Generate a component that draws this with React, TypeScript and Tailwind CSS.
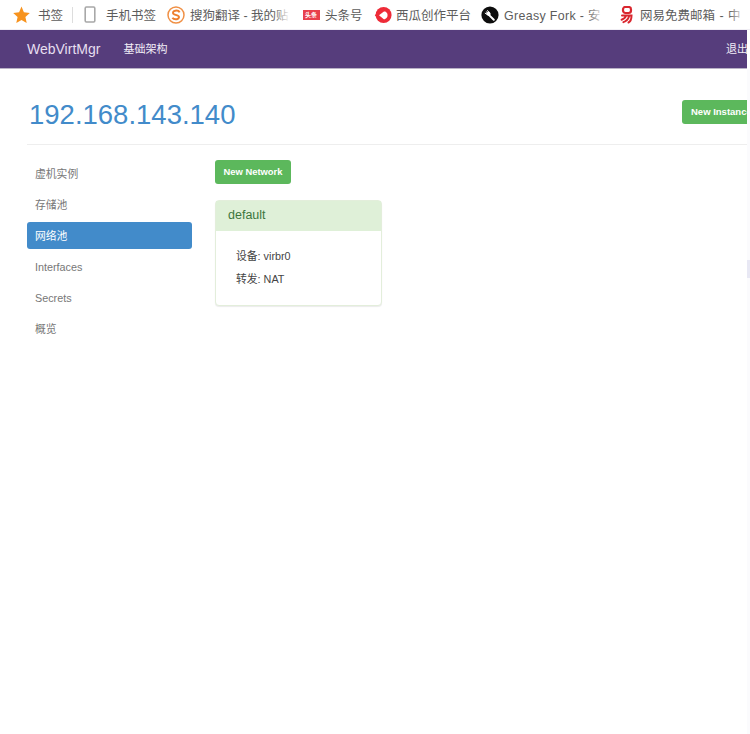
import React from "react";

function Bookmark({
  icon,
  text,
  width,
  gap = 5,
  textWidth,
  fade,
  greasy,
  wide,
}: {
  icon: React.ReactNode;
  text: string;
  width: number;
  gap?: number;
  textWidth?: number;
  fade?: boolean;
  greasy?: boolean;
  wide?: boolean;
}) {
  return (
    <div className="flex items-center shrink-0" style={{ width }}>
      <span className="w-[18px] h-[18px] flex items-center justify-center shrink-0">{icon}</span>
      <span
        className={
          greasy
            ? "relative pt-[3px] overflow-hidden whitespace-nowrap text-[12.4px] tracking-[0.35px] leading-[18px] text-[#5c5c5c]"
            : wide
              ? "relative pt-[2px] overflow-hidden whitespace-nowrap text-[12.5px] [word-spacing:1px] leading-[18px] text-[#5c5c5c]"
              : "relative pt-[2px] overflow-hidden whitespace-nowrap text-[12.5px] leading-[18px] text-[#5c5c5c]"
        }
        style={{ marginLeft: gap, width: textWidth }}
      >
        {text}
        {fade && <span className="absolute right-0 top-0 h-full w-[16px] bg-gradient-to-r from-transparent to-white" />}
      </span>
    </div>
  );
}

const Star = () => (
  <svg width="18" height="18" viewBox="0 0 18 18">
    <path d="M9.5 .6l2.4 5.7 5.9.6-4.4 4.1 1.3 6-5.2-3-5.2 3 1.3-6L1.2 6.9l5.9-.6z" fill="#f7931e" />
  </svg>
);
const Phone = () => (
  <svg width="12" height="17" viewBox="0 0 12 17">
    <rect x="1.2" y="1" width="9.6" height="15" rx="1.2" fill="none" stroke="#a8a8a8" strokeWidth="1.6" />
  </svg>
);
const Sogou = () => (
  <svg width="18" height="18" viewBox="0 0 18 18">
    <circle cx="9" cy="9" r="8" fill="#fff" stroke="#f09045" strokeWidth="1.5" />
    <path d="M12.6 6.4C12 5 10 4.4 8.2 4.7 5.8 5.1 5.2 7.5 7.2 8.4l3.6 1.2c2 .8 1.4 3.2-.8 3.6-1.8.3-3.8-.2-4.6-1.4" fill="none" stroke="#ee7f2d" strokeWidth="2" />
  </svg>
);
const Toutiao = () => (
  <span className="w-[17px] h-[10px] bg-[#e8404c] text-white text-[6px] leading-[10px] font-bold text-center overflow-hidden">头条</span>
);
const Xigua = () => (
  <svg width="18" height="18" viewBox="0 0 18 18">
    <circle cx="9.6" cy="9" r="8" fill="#ee2b38" />
    <path d="M.8 9.5L5 4h4v10H6z" fill="#ee2b38" />
    <path d="M5 9.2l4.6-3.5c.5-.4 1.2-.4 1.7-.1l1.2 .8c.7.5 1 1.2 1 2v1.6c0 .8-.4 1.5-1 2l-1.4.9c-.5.3-1.1.3-1.6 0z" fill="#fff" />
  </svg>
);
const Greasy = () => (
  <svg width="18" height="18" viewBox="0 0 18 18">
    <circle cx="9" cy="9" r="8.6" fill="#0d0d0d" />
    <path d="M7.6 8.6l5.2 5.2" stroke="#fff" strokeWidth="2" strokeLinecap="round" />
    <path d="M5.2 7.6c.6 1.6 2 2.6 3.4 2.4l1-1.4c.2-1.4-.8-2.8-2.4-3.4" fill="#fff" />
    <path d="M4.2 7.2l2.4 1.6M5.2 5.8l2.2 2M6.6 4.6l1.8 2.4" stroke="#fff" strokeWidth="1" strokeLinecap="round" />
  </svg>
);
const Netease = () => (
  <svg width="16" height="18" viewBox="0 0 16 18">
    <rect x="4" y="1" width="8" height="6" rx="2.4" fill="none" stroke="#d9262e" strokeWidth="2.2" />
    <path d="M3 9.5h9.5c0 3.5-1 6-3 7M7 9.8c-.6 2-2 3.2-4.4 4M10 10.5c-.8 2.6-2.6 4.6-5.6 5.6" fill="none" stroke="#d9262e" strokeWidth="2" strokeLinecap="round" />
  </svg>
);

function SideItem({ children, active }: { children: React.ReactNode; active?: boolean }) {
  return (
    <li
      className={
        active
          ? "h-[27px] rounded-[3px] bg-[#428bca] text-white pl-2 leading-[28px]"
          : "h-[27px] text-[#777] pl-2 leading-[28px]"
      }
    >
      {children}
    </li>
  );
}

export default function App() {
  return (
    <div
      className="w-[750px] h-[734px] overflow-hidden bg-white relative"
      style={{ fontFamily: "'Liberation Sans', 'Noto Sans CJK SC', sans-serif" }}
    >
      <div className="h-[30px] flex items-center pl-[12px] bg-white overflow-hidden border-b border-b-[#f0eef4]">
        <Bookmark icon={<Star />} text="书签" width={60} gap={8} />
        <span className="w-px h-[16px] bg-[#ddd] shrink-0" />
        <span className="w-[8px] shrink-0" />
        <Bookmark icon={<Phone />} text="手机书签" width={86} gap={7} />
        <Bookmark icon={<Sogou />} text="搜狗翻译 - 我的贴" width={135} textWidth={100} fade />
        <Bookmark icon={<Toutiao />} text="头条号" width={72} />
        <Bookmark icon={<Xigua />} text="西瓜创作平台" width={107} gap={4} />
        <Bookmark icon={<Greasy />} text="Greasy Fork - 安" width={137} textWidth={100} fade greasy />
        <Bookmark icon={<Netease />} text="网易免费邮箱 - 中" width={130} gap={4} textWidth={105} fade wide />
      </div>

      <div className="w-[747px] overflow-hidden">
        <nav className="h-[39px] bg-[#563d7c] border-b border-b-[#b9b2c6] flex items-center pl-[27px] w-[760px]">
          <span className="text-[14px] text-[#e6dff0]">WebVirtMgr</span>
          <span className="ml-[23px] text-[11px] text-[#f2eef7]">基础架构</span>
          <span className="ml-auto mr-[4px] w-[30px] text-[11px] text-[#f2eef7]">退出</span>
        </nav>

        <div className="pl-[27px]">
          <div className="h-[76px] border-b border-[#eee] flex items-start justify-between">
            <h1 className="mt-[29px] ml-[2px] text-[27.5px] leading-[34px] text-[#428bca]">192.168.143.140</h1>
            <button className="mt-[31px] -mr-[20px] h-[24px] w-[85px] shrink-0 rounded-[3px] bg-[#5cb85c] text-white text-[9.5px] font-bold whitespace-nowrap text-left pl-[9px]">
              New Instance
            </button>
          </div>

          <div className="flex mt-[15px]">
            <ul className="w-[165px] shrink-0 text-[10.8px] flex flex-col gap-[4px]">
              <SideItem>虚机实例</SideItem>
              <SideItem>存储池</SideItem>
              <SideItem active>网络池</SideItem>
              <SideItem>Interfaces</SideItem>
              <SideItem>Secrets</SideItem>
              <SideItem>概览</SideItem>
            </ul>
            <div className="ml-[23px] w-[167px] shrink-0">
              <button className="block h-[24px] w-[76px] rounded-[3px] bg-[#5cb85c] text-white text-[9.4px] font-bold">
                New Network
              </button>
              <div className="mt-[16px] rounded-[4px] border border-[#e3eedb] bg-white shadow-[0_1px_1px_rgba(0,0,0,0.08)]">
                <div className="h-[30px] bg-[#dff0d8] text-[#3c763d] text-[12.5px] leading-[29px] pl-[12px]">default</div>
                <div className="h-[74px] pl-[20px] pt-[14px] text-[10.8px] text-[#444]">
                  <p className="leading-[23px]">设备: virbr0</p>
                  <p className="leading-[23px]">转发: NAT</p>
                </div>
              </div>
            </div>
          </div>
        </div>
      </div>
      <span className="absolute left-[747px] top-[69px] bottom-0 w-[3px] bg-[#fbfbfd]" />
      <span className="absolute left-[747px] top-[260px] h-[18px] w-[3px] bg-[#e8e8f4]" />
    </div>
  );
}
